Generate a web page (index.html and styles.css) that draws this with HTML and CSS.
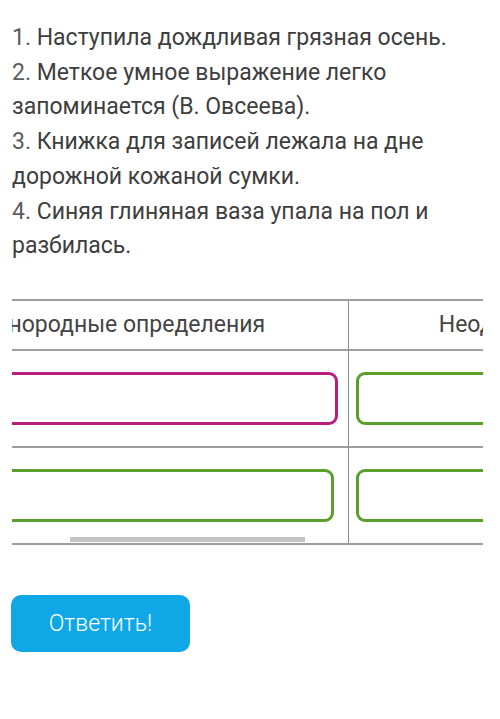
FILE: index.html
```html
<!DOCTYPE html>
<html>

<head>
    <meta charset='utf-8'>
    <title>Задание</title>
    <meta name='viewport' content='width=device-width, initial-scale=1'>
    <link rel="stylesheet" href="styles.css">
</head>

<body>
    <div class="task">
        <p><span class="num">1.</span> Наступила дождливая грязная осень.</p>
        <p><span class="num">2.</span> Меткое умное выражение легко запоминается (В. Овсеева).</p>
        <p><span class="num">3.</span> Книжка для записей лежала на дне дорожной кожаной сумки.</p>
        <p><span class="num">4.</span> Синяя глиняная ваза упала на пол и разбилась.</p>
    </div>

    <div class="answers-frame">
        <div id="answers" class="answers">
            <div class="answers-grid">
                <div class="cell head first">Однородные определения</div>
                <div class="cell head">Неоднородные определения</div>

                <div class="cell first">
                    <div class="drop drop-active"></div>
                </div>
                <div class="cell">
                    <div class="drop"></div>
                </div>

                <div class="cell first last-row narrow">
                    <div class="drop"></div>
                </div>
                <div class="cell last-row">
                    <div class="drop"></div>
                </div>
            </div>
        </div>
        <div class="scrollbar">
            <div id="thumb" class="thumb"></div>
        </div>
    </div>

    <button class="submit" type="button">Ответить!</button>

    <script type="text/javascript">
        // table is scrolled a bit to the right, like in the app
        let answers = document.getElementById("answers");
        let thumb = document.getElementById("thumb");
        answers.scrollLeft = 116;

        let ratio = answers.clientWidth / answers.scrollWidth;
        thumb.style.width = (answers.clientWidth * ratio) + "px";
        thumb.style.marginLeft = (answers.scrollLeft * ratio) + "px";
    </script>
</body>

</html>
```

FILE: styles.css
```css
body {
    margin: 0;
    background-color: white;
    font-family: Roboto, "Noto Sans", sans-serif;
    color: #3e3e3e;
}

.task {
    padding: 21px 12px 0;
    font-size: 23px;
    line-height: 34.7px;
}

.task p {
    margin: 0;
}

.task .num {
    color: #5c5c5c;
}

.answers-frame {
    position: relative;
    margin: 35px 17px 0 12px;
    border-top: 2px solid #9d9d9d;
    border-bottom: 2px solid #9d9d9d;
}

.answers {
    overflow: hidden;
}

.answers-grid {
    display: grid;
    grid-template-columns: 453px 491px;
}

.cell {
    padding: 21px 9px 21px 7px;
    border-bottom: 2px solid #9d9d9d;
}

.cell.first {
    border-right: 1px solid #8a8a8a;
    padding-right: 10px;
}

.cell.head {
    height: 48px;
    padding: 0;
    display: flex;
    align-items: center;
    justify-content: center;
    font-size: 23px;
    color: #444;
}

.cell.last-row {
    border-bottom: none;
    padding-bottom: 21px;
}

.cell.narrow {
    padding-right: 14px;
}

.drop {
    height: 53px;
    box-sizing: border-box;
    border: 3px solid #5a9f2c;
    border-radius: 9px;
}

.drop-active {
    border-color: #b81e7e;
}

/* overlay scrollbar, sits on top of the last row */
.scrollbar {
    position: absolute;
    left: 0;
    right: 0;
    bottom: 1px;
    height: 5px;
}

.thumb {
    height: 100%;
    background-color: #c4c4c4;
}

.submit {
    display: block;
    margin: 50px 0 0 11px;
    width: 179px;
    height: 57px;
    border: none;
    border-radius: 10px;
    background-color: #10a7e7;
    color: white;
    font-family: Roboto, "Noto Sans", sans-serif;
    font-weight: 300;
    font-size: 23px;
}
```
